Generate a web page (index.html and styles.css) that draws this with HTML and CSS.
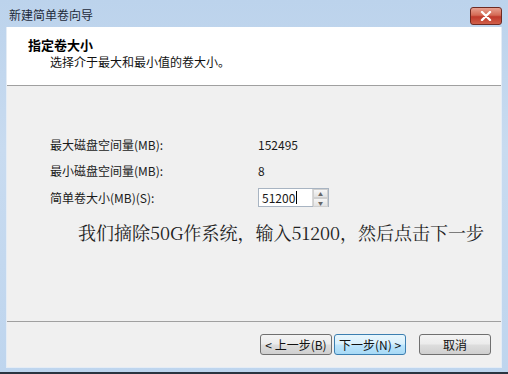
FILE: index.html
```html
<!DOCTYPE html>
<html lang="zh-CN">
<head>
    <meta charset="UTF-8">
    <title>新建简单卷向导</title>
    <link rel="stylesheet" href="styles.css">
</head>
<body>
    <div class="window">
        <div class="titlebar">
            <span class="title">新建简单卷向导</span>
            <div class="close-btn">
                <svg width="14" height="10" viewBox="0 0 14 10">
                    <path d="M3 1 L11 9 M11 1 L3 9" stroke="#fff" stroke-width="2.4" stroke-linecap="round"/>
                </svg>
            </div>
        </div>

        <div class="client">
            <div class="header">
                <div class="header-title">指定卷大小</div>
                <div class="header-sub">选择介于最大和最小值的卷大小。</div>
            </div>

            <div class="body">
                <div class="row">
                    <span class="label">最大磁盘空间量(MB):</span>
                    <span class="value">152495</span>
                </div>
                <div class="row">
                    <span class="label">最小磁盘空间量(MB):</span>
                    <span class="value">8</span>
                </div>
                <div class="row">
                    <span class="label">简单卷大小(MB)(S):</span>
                    <div class="spin">
                        <div class="spin-input">51200<span class="caret"></span></div>
                        <div class="spin-btns">
                            <div class="spin-btn">▲</div>
                            <div class="spin-btn">▼</div>
                        </div>
                    </div>
                </div>
                <div class="note">我们摘除50G作系统，输入51200，然后点击下一步</div>
            </div>

            <div class="footer">
                <button class="btn">&lt; 上一步(B)</button>
                <button class="btn btn-default">下一步(N) &gt;</button>
                <button class="btn btn-cancel">取消</button>
            </div>
        </div>
        <div class="bottom-edge"></div>
    </div>
</body>
</html>
```

FILE: styles.css
```css
body {
    margin: 0;
    font-family: "Noto Sans CJK SC", "Liberation Sans", sans-serif;
    font-size: 12px;
    color: #1a1a1a;
}

.window {
    width: 508px;
    height: 374px;
    display: flex;
    flex-direction: column;
    background: linear-gradient(180deg, #bcd3ec 0%, #c8dbf0 40%, #bed5ee 100%);
    overflow: hidden;
}

.titlebar {
    height: 27px;
    display: flex;
    align-items: center;
    justify-content: space-between;
    padding: 0 6px 0 9px;
    flex-shrink: 0;
}

.title {
    color: #1e2a3a;
    font-size: 12px;
    margin-top: 2px;
}

.close-btn {
    width: 30px;
    height: 16px;
    margin-top: 5px;
    border: 1px solid #6e2a22;
    border-radius: 3px;
    background: linear-gradient(180deg, #e8a090 0%, #d46a55 45%, #c0392b 55%, #d0604a 100%);
    display: flex;
    align-items: center;
    justify-content: center;
}

.client {
    flex: 1;
    margin: 0 6px;
    display: flex;
    flex-direction: column;
    background: #f0f0f0;
    border: 1px solid #e4ecf5;
    border-top: none;
}

.header {
    height: 59px;
    background: #fff;
    border-bottom: 1px solid #a0a0a0;
    box-sizing: border-box;
    padding: 9px 0 0 21px;
    flex-shrink: 0;
}

.header-title {
    font-weight: bold;
    font-size: 13px;
    color: #000;
    line-height: 18px;
}

.header-sub {
    padding-left: 22px;
    line-height: 16px;
    color: #111;
}

.body {
    flex: 1;
    padding: 45px 0 0 43px;
    border-bottom: 1px solid #a0a0a0;
}

.row {
    display: flex;
    align-items: center;
    height: 26.5px;
}

.label {
    width: 208px;
}

.spin {
    display: flex;
    height: 19px;
    width: 71px;
    border: 1px solid #a8b4c2;
    background: #fff;
    box-sizing: border-box;
}

.spin-input {
    flex: 1;
    padding-left: 3px;
    line-height: 17px;
    display: flex;
    align-items: center;
}

.caret {
    width: 1px;
    height: 13px;
    background: #000;
    margin-left: 1px;
}

.spin-btns {
    width: 15px;
    display: flex;
    flex-direction: column;
    border-left: 1px solid #d8d8d8;
}

.spin-btn {
    flex: 1;
    font-size: 5px;
    color: #666;
    display: flex;
    align-items: center;
    justify-content: center;
    background: linear-gradient(180deg, #f6f6f6, #e2e2e2);
    border: 1px solid #d0d0d0;
}

.note {
    margin: 10px 0 0 28px;
    font-family: "Noto Serif CJK SC", "Liberation Serif", "Noto Sans CJK SC", serif;
    font-size: 18px;
    color: #222;
    line-height: 22px;
    white-space: nowrap;
}

.footer {
    height: 45px;
    display: flex;
    align-items: center;
    padding: 0 0 0 253px;
    gap: 2px;
    flex-shrink: 0;
}

.btn {
    width: 72px;
    height: 21px;
    font-family: inherit;
    font-size: 12px;
    color: #111;
    padding: 0;
    border: 1px solid #707070;
    border-radius: 3px;
    background: linear-gradient(180deg, #f4f4f4 0%, #ebebeb 48%, #dddddd 52%, #cfcfcf 100%);
}

.btn-default {
    border-color: #3c7fb1;
    background: linear-gradient(180deg, #e8f6fd 0%, #d9f0fc 48%, #bee6fd 52%, #a7d9f5 100%);
}

.btn-cancel {
    margin-left: 11px;
}

.bottom-edge {
    height: 4px;
    border-bottom: 2px solid #2a3440;
    flex-shrink: 0;
}
```
